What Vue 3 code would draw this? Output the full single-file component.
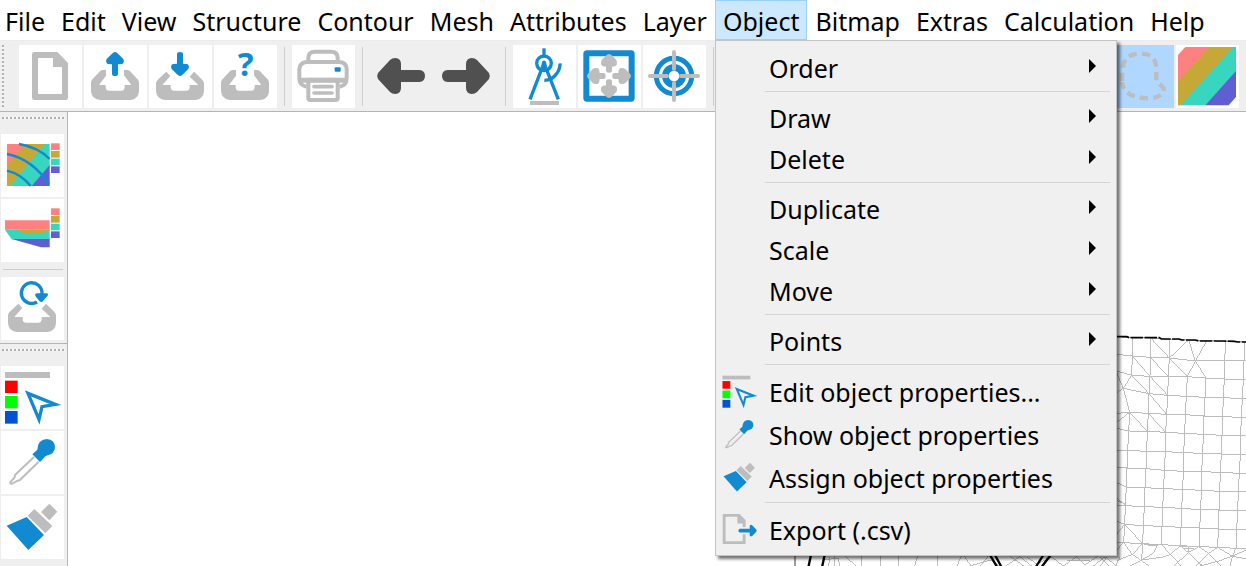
<template>
  <div class="app" @click="openMenu = ''">
    <svg class="sprite" aria-hidden="true">
      <symbol id="new" viewBox="0 0 189 189">
        <path fill="#bdbdbd" fill-rule="evenodd" d="M46 21H115L147 54V158q0 7-7 7H46q-7 0-7-7V28q0-7 7-7zM57 39V147H129V66H102V39z" />
      </symbol>
      <symbol id="tray" viewBox="0 0 189 189">
        <path fill="#bdbdbd" d="M66 75H57Q52 75 48 79L24 104Q21 108 21 114V139Q23 163 49 165H139Q163 163 165 139V114Q165 108 162 104L138 79Q134 75 129 75H120V91L142 120H122V128Q121 137 111 137H76Q66 137 65 128V120H45L66 92z" />
      </symbol>
      <symbol id="tray-open" viewBox="0 0 189 189">
        <path fill="#bdbdbd" d="M52 80L25 106Q21 110 21 116V139Q23 163 49 165H139Q163 163 165 139V116Q165 110 161 106L135 80L122 95L148 120H122V128Q121 137 111 137H76Q66 137 65 128V120H40L64 93z" />
      </symbol>
      <symbol id="load" viewBox="0 0 189 189">
        <use href="#tray" />
        <path fill="#118ad1" d="M93 21Q98 21 102 26L118 42Q122 48 118 55Q115 58 102 58V86Q102 93 93 93Q84 93 84 86V58Q71 58 68 55Q64 48 68 42L84 26Q88 21 93 21z" />
      </symbol>
      <symbol id="save" viewBox="0 0 189 189">
        <use href="#tray-open" />
        <path fill="#118ad1" d="M93 93Q98 93 102 88L118 72Q122 66 118 59Q115 56 102 56V28Q102 21 93 21Q84 21 84 28V56Q71 56 68 59Q64 66 68 72L84 88Q88 93 93 93z" />
      </symbol>
      <symbol id="print" viewBox="0 0 189 189">
        <g fill="none" stroke="#bdbdbd" stroke-width="12">
          <path d="M49 51V38Q50 20 68 20H118Q136 20 137 38V51" />
          <path d="M44 125Q22 122 22 100V72Q24 52 44 51H143Q163 52 164 72V100Q164 122 143 125" />
          <path d="M26 106H160" stroke-width="15" stroke-linecap="round" />
          <path d="M49 108V158Q49 165 56 165H130Q137 165 137 158V108" fill="#fff" />
          <path d="M49 106H137" stroke-width="15" />
          <path d="M66 125H120M66 144H120" stroke-width="11" stroke-linecap="round" />
        </g>
        <rect x="128" y="67" width="18" height="13" rx="3" fill="#118ad1" />
      </symbol>
      <symbol id="back" viewBox="0 0 189 189">
        <path fill="#505050" d="M24 84L60 45Q66 39 76 39Q93 40 93 57V75H148Q165 76 165 93Q165 110 148 111H93V129Q93 146 76 147Q66 147 60 141L24 102Q19 93 24 84z" />
      </symbol>
      <symbol id="forward" viewBox="0 0 189 189">
        <use href="#back" transform="translate(186 0) scale(-1 1)" />
      </symbol>
      <symbol id="measure" viewBox="0 0 189 189">
        <g fill="none" stroke="#118ad1" stroke-width="10">
          <path d="M93 10V32" />
          <circle cx="93" cy="55" r="22" />
          <path d="M90 62L51 163M96 62L136 163" />
          <path d="M141 55Q142 72 130 87Q117 106 94 106" />
        </g>
        <path fill="#118ad1" d="M83 74L87 50Q93 43 99 50L103 74z" />
        <path fill="#bdbdbd" d="M51 168H138V180H51z" />
      </symbol>
      <symbol id="zoom-all" viewBox="0 0 189 189">
        <rect x="25" y="25" width="136" height="136" rx="2" fill="none" stroke="#118ad1" stroke-width="18" />
        <path id="small-arrow" fill="#bdbdbd" d="M93 27Q98 28 101 31L115 45Q119 52 116 60Q112 65 102 65V76Q102 83 93 83Q84 83 84 76V65Q74 65 70 60Q67 52 71 45L85 31Q88 28 93 27z" />
        <use href="#small-arrow" transform="rotate(90 93 93)" />
        <use href="#small-arrow" transform="rotate(180 93 93)" />
        <use href="#small-arrow" transform="rotate(270 93 93)" />
      </symbol>
      <symbol id="target" viewBox="0 0 189 189">
        <g fill="none" stroke="#118ad1">
          <circle cx="93" cy="93" r="53" stroke-width="15" />
          <circle cx="93" cy="93" r="26" stroke-width="20" />
        </g>
        <path fill="none" stroke="#bdbdbd" stroke-width="12" stroke-linecap="round" d="M21 93H72M114 93H165M93 21V72M93 114V165" />
      </symbol>
      <symbol id="lasso" viewBox="0 0 189 189">
        <path fill="none" stroke="#bdbdbd" stroke-width="13" stroke-dasharray="25 15" stroke-dashoffset="-4" d="M33 112V80C36 40 54 26 92 26C126 28 136 45 136 75V106L158 130Q160 158 110 160C60 158 36 140 33 112" />
      </symbol>
      <symbol id="stripes" viewBox="0 0 189 189">
        <path fill="#ff8080" d="M28 6H104L6 114V30z" />
        <path fill="#c6a837" d="M100 6H176L20 181H6V110z" />
        <path fill="#38d6be" d="M172 6H180V82L92 181H14z" />
        <path fill="#5f5fd3" d="M180 78V156L158 181H88z" />
      </symbol>
      <symbol id="legend" viewBox="0 0 189 189">
        <path fill="#ff8080" d="M150 28h26v20h-26z" />
        <path fill="#c6a837" d="M150 51h26v20h-26z" />
        <path fill="#38d6be" d="M150 74h26v20h-26z" />
        <path fill="#5f5fd3" d="M150 97h26v20h-26z" />
      </symbol>
      <symbol id="plan" viewBox="0 0 189 189">
        <path fill="#ff8080" d="M18 30H75L18 96z" />
        <path fill="#c6a837" d="M72 30H135L30 156H18V93z" />
        <path fill="#38d6be" d="M132 30H146V96L94 156H27z" />
        <path fill="#5f5fd3" d="M146 93V156H92z" />
        <path fill="none" stroke="#118ad1" stroke-width="7" d="M54 30Q112 40 146 75M18 60Q92 74 144 150M18 110Q60 120 89 156" />
        <use href="#legend" />
      </symbol>
      <symbol id="section" viewBox="0 0 189 189">
        <path fill="#ff8080" d="M12 64H146V92H12z" />
        <path fill="#38d6be" d="M12 92H146V121H32z" />
        <path fill="#c6a837" d="M44 92H146V96L113 105H76z" />
        <path fill="#5f5fd3" d="M32 120H146V145H120z" />
        <use href="#legend" />
      </symbol>
      <symbol id="refresh" viewBox="0 0 189 189">
        <use href="#tray-open" />
        <path fill="none" stroke="#118ad1" stroke-width="10" d="M108 75A31 31 0 1 1 123 49V56" />
        <path fill="#118ad1" d="M103 52Q104 49 108 49H138Q143 50 140 56L124 74Q120 76 116 73L105 60Q102 56 103 52z" />
      </symbol>
      <symbol id="edit" viewBox="0 0 189 189">
        <path fill="#bdbdbd" d="M12 18H147V36H12z" />
        <path fill="#f00" d="M12 44H50V81H12z" />
        <path fill="#0f0" d="M12 90H50V127H12z" />
        <path fill="#0053d6" d="M12 135H50V173H12z" />
        <path fill="none" stroke="#118ad1" stroke-width="10" d="M81 82L163 115L123 122L114 160z" />
      </symbol>
      <symbol id="pick" viewBox="0 0 189 189">
        <path fill="none" stroke="#bdbdbd" stroke-width="6" stroke-linejoin="round" d="M99 78L42 132Q42 141 36 145Q27 153 28 158Q34 160 42 153Q50 148 56 148L113 92" />
        <path fill="#118ad1" d="M94 70L109 56Q110 26 137 24Q161 25 162 49Q161 69 140 73Q132 75 129 80L117 93z" />
      </symbol>
      <symbol id="brush" viewBox="0 0 189 189">
        <path fill="#118ad1" d="M17 89L77 63L129 117L82 162z" />
        <path fill="#bdbdbd" d="M100 39L154 90L133 112L80 59zM145 23L169 47L145 73L120 48z" />
      </symbol>
      <symbol id="export" viewBox="0 0 189 189">
        <path fill="none" stroke="#bdbdbd" stroke-width="14" d="M117 82V52L92 26H20V158H117V118" />
        <path fill="#bdbdbd" d="M84 24H96L122 52V66H84z" />
        <path fill="#118ad1" d="M96 91H144V76Q148 69 156 74L176 94Q179 100 176 106L156 126Q148 131 144 124V109H96Q89 106 89 100Q89 94 96 91z" />
      </symbol>
    </svg>

    <nav class="menubar" aria-label="Main menu">
      <div v-for="name in menus" :key="name" class="menu-slot">
        <button class="menu-button" :class="{ active: name === openMenu }" :aria-expanded="name === openMenu" @click.stop="toggle(name)">{{ name }}</button>
        <div v-if="name === 'Object' && openMenu === name" class="dropdown" role="menu" @click.stop>
          <template v-for="(item, i) in objectMenu" :key="i">
            <hr v-if="!item" class="menu-line">
            <button v-else class="menu-item" :class="{ 'with-icon': item.icon }" role="menuitem">
              <span class="item-icon">
                <svg v-if="item.icon" aria-hidden="true"><use :href="'#' + item.icon" /></svg>
              </span>
              <span class="item-label">{{ item.label }}</span>
              <svg v-if="!item.icon" class="submenu" viewBox="0 0 7 14" aria-hidden="true"><path d="M0 0L7 7L0 14z" /></svg>
            </button>
          </template>
        </div>
      </div>
    </nav>

    <div class="toolbar" role="toolbar" aria-label="Standard">
      <span class="grip"></span>
      <template v-for="(tool, i) in topTools" :key="i">
        <span v-if="!tool" class="divider"></span>
        <button v-else class="tool" :class="{ flat: tool.flat }" :aria-label="tool.label">
          <svg aria-hidden="true"><use :href="'#' + tool.icon" /></svg>
          <span v-if="tool.mark" class="mark">{{ tool.mark }}</span>
        </button>
      </template>
      <span class="tool-space"></span>
      <button class="tool checked" aria-label="Lasso selection" aria-pressed="true">
        <svg aria-hidden="true"><use href="#lasso" /></svg>
      </button>
      <button class="tool" aria-label="Coloured areas">
        <svg aria-hidden="true"><use href="#stripes" /></svg>
      </button>
    </div>

    <div class="workspace">
      <aside class="sidebar">
        <div v-for="(group, g) in sideTools" :key="g" class="side-group" role="toolbar">
          <span class="grip horizontal"></span>
          <template v-for="(tool, i) in group" :key="i">
            <span v-if="!tool" class="divider horizontal"></span>
            <button v-else class="tool" :aria-label="tool.label">
              <svg aria-hidden="true"><use :href="'#' + tool.icon" /></svg>
            </button>
          </template>
        </div>
      </aside>

      <main class="canvas">
        <!-- mesh coordinates are stored in thirds of a pixel -->
        <svg class="mesh" aria-label="Mesh">
          <g transform="translate(1032 208) scale(.333333)">
            <path class="edge" :d="meshPath" />
            <path class="edge" d="M152 54L208 114L262 170M266 60L208 114M266 60L286 123L318 174M320 63L286 123L262 170M97 108L150 169L203 226M151 112L205 170M95 166L147 221L200 283M95 166L70 205L89 277L142 334M50 158L70 205L50 218M145 280L197 337M89 277L50 307M74 613L128 671M74 613L50 642M50 532L76 557M50 542L76 552" />
            <path class="edge" d="M71 668L50 690M71 668L97 703L128 671L125 720L85 740M97 703L50 722M97 703L150 740M128 671L160 677L172 677L160 700L125 720L190 711L212 703L241 677L265 698L297 680L326 700L353 682L397 709L438 690M144 677H174M184 674L212 703L245 740M241 680H300M251 685H283M265 698V677M265 698L220 740M265 698L310 740M326 700L285 740M326 700L365 740M397 709L350 725L300 738M397 709L438 716M397 709L390 740M408 685L397 709M0 712L30 740M20 712L0 740M60 712L45 740" />
            <path class="outline" d="M50 50H80L88 53H178L184 57H238L244 60H286L296 63H370L404 64L412 66H445" />
          </g>
          <g transform="translate(712 428) scale(.333333)">
            <path class="frame" d="M45 40V85" />
            <path class="edge" d="M245 40V85M302 40V85M356 40V85M413 45L404 80M473 45V80M150 50L145 80M165 48L162 80M130 60L175 54L180 80M195 48L230 80M545 45L530 80M550 45L575 80M570 78L630 60L660 78M600 80L625 48M675 80L720 50L755 78M690 50L735 80M740 50L770 72L820 50M820 55L850 78L890 50L915 75L955 48M860 60L930 62M940 78L975 50L1010 78" />
            <path class="outline thick" d="M93 45L85 82M134 45L126 82M630 45L652 82M645 45L665 82M790 45L767 82M812 45L784 82" />
          </g>
        </svg>
      </main>
    </div>
  </div>
</template>

<script setup>
import { computed, ref } from 'vue';

const menus = ['File', 'Edit', 'View', 'Structure', 'Contour', 'Mesh', 'Attributes', 'Layer', 'Object', 'Bitmap', 'Extras', 'Calculation', 'Help'];
const openMenu = ref('Object');

function toggle(name) {
  openMenu.value = openMenu.value === name ? '' : name;
}

// null is a separator
const objectMenu = [
  { label: 'Order' },
  null,
  { label: 'Draw' },
  { label: 'Delete' },
  null,
  { label: 'Duplicate' },
  { label: 'Scale' },
  { label: 'Move' },
  null,
  { label: 'Points' },
  null,
  { label: 'Edit object properties...', icon: 'edit' },
  { label: 'Show object properties', icon: 'pick' },
  { label: 'Assign object properties', icon: 'brush' },
  null,
  { label: 'Export (.csv)', icon: 'export' },
];

const topTools = [
  { icon: 'new', label: 'New' },
  { icon: 'load', label: 'Open' },
  { icon: 'save', label: 'Save' },
  { icon: 'tray', label: 'File info', mark: '?' },
  null,
  { icon: 'print', label: 'Print' },
  null,
  { icon: 'back', label: 'Undo', flat: true },
  { icon: 'forward', label: 'Redo', flat: true },
  null,
  { icon: 'measure', label: 'Measure' },
  { icon: 'zoom-all', label: 'Show all' },
  { icon: 'target', label: 'Centre' },
  null,
];

const sideTools = [
  [
    { icon: 'plan', label: 'Plan view' },
    { icon: 'section', label: 'Section view' },
    null,
    { icon: 'refresh', label: 'Reload' },
  ],
  [
    { icon: 'edit', label: 'Edit object properties' },
    { icon: 'pick', label: 'Show object properties' },
    { icon: 'brush', label: 'Assign object properties' },
  ],
];

const meshRows = [
  [[50, 50], [98, 53], [152, 54], [208, 58], null, null, [377, 64], [434, 66]],
  [[50, 103], [97, 108], [151, 112], [208, 114], [286, 123], null, [374, 122], [432, 122]],
  [[50, 153], [95, 166], [150, 169], [205, 170], [262, 170], [318, 174], [373, 177], [430, 179]],
  [[70, 205], null, [147, 221], [203, 226], [259, 229], [315, 232], [370, 233], [427, 236]],
  [[50, 280], [89, 277], [145, 280], [200, 283], [256, 284], [312, 288], [368, 290], [424, 292]],
  [[50, 325], [86, 333], [142, 334], [197, 337], [254, 340], [310, 343], [366, 346], [422, 347]],
  [[50, 391], [83, 391], [140, 394], [196, 395], [251, 398], [308, 400], [364, 402], [421, 404]],
  [[50, 442], [81, 444], [138, 446], [193, 451], [250, 454], [305, 455], [361, 457], [418, 460]],
  [[50, 488], [79, 501], [135, 503], [191, 506], [248, 508], [304, 511], [359, 514], [415, 516]],
  [[50, 555], [76, 557], [133, 560], [188, 562], [245, 565], [302, 569], [357, 570], [413, 572]],
  [[50, 603], [74, 613], [130, 617], [186, 619], [243, 622], [299, 624], [355, 627], [410, 629]],
  [[50, 669], [71, 668], [128, 671], [184, 674], [241, 677], [297, 680], [353, 682], [408, 685]],
];

const meshPath = computed(() => {
  const across = meshRows.map((row) => 'M' + row.filter(Boolean).map((p) => p.join(' ')).join('L') + 'L445 ' + row.at(-1)[1]);
  const down = [];
  for (let c = 1; c < 8; c++) {
    for (let r = 1; r < meshRows.length; r++) {
      const a = meshRows[r - 1][c];
      const b = meshRows[r][c];
      if (!a || !b || (c === 4 && r === 2)) continue;
      down.push(`M${a.join(' ')}L${b.join(' ')}`);
    }
  }
  return across.join('') + down.join('');
});
</script>

<style>
body { margin: 0; overflow: hidden; }
</style>

<style scoped>
.app {
  display: flex;
  flex-direction: column;
  height: 100vh;
  background: #fff;
  color: #000;
  font-family: "Noto Sans", "Open Sans", sans-serif;
  font-size: 25px;
  line-height: 36px;
}
.sprite { position: absolute; width: 0; height: 0; }
button {
  padding: 0;
  border: 0;
  background: none;
  color: inherit;
  font: inherit;
}
svg { display: block; }

.menubar {
  display: flex;
  flex: none;
  height: 40px;
  border-bottom: 1px solid #ececec;
}
.menu-slot { position: relative; }
.menu-slot:first-child { margin-left: -3px; }
.menu-button {
  height: 40px;
  padding: 2px 7px;
  border: 1px solid transparent;
  white-space: nowrap;
}
.menu-button.active { background: #cce8ff; border-color: #99d1ff; }

.dropdown {
  position: absolute;
  top: 40px;
  left: 0;
  z-index: 10;
  box-sizing: border-box;
  width: 402px;
  padding: 4px 0 6px;
  border: 1px solid #c4c4c4;
  background: #f0f0f0;
  box-shadow: 3px 3px 3px rgba(0, 0, 0, .55);
}
.menu-item {
  display: flex;
  align-items: flex-end;
  width: 100%;
  height: 41px;
  padding: 0 20px 0 4px;
  text-align: left;
}
.menu-item.with-icon { height: 43px; }
.menu-item:hover { background: #91c9f7; }
.item-icon { width: 39px; margin-right: 10px; }
.item-icon svg { width: 39px; height: 39px; }
.item-label { flex: 1; white-space: nowrap; }
.with-icon .item-label { padding-bottom: 1px; }
.submenu { align-self: center; width: 7px; height: 14px; }
.menu-line {
  height: 1px;
  margin: 5px 6px 3px 49px;
  border: 0;
  background: #d5d5d5;
}

.toolbar {
  display: flex;
  flex: none;
  gap: 2px;
  height: 63px;
  padding: 4px 0 3px 2px;
  border-bottom: 1px solid #b4b4b4;
  background: #efefef;
}
.tool { position: relative; flex: none; width: 63px; height: 63px; background: #fff; }
.tool.flat { background: none; }
.tool.checked { background: #afd7ff; }
.tool svg { width: 63px; height: 63px; }
.mark {
  position: absolute;
  top: 0;
  left: 0;
  width: 63px;
  color: #118ad1;
  font-size: 33px;
  font-weight: 700;
  line-height: 38px;
  text-align: center;
}
.grip {
  flex: none;
  width: 2px;
  height: 62px;
  margin-right: 13px;
  background: repeating-linear-gradient(#b0b0b0 0 2px, #f8f8f8 2px 4px);
}
.divider { flex: none; width: 1px; margin: 2px 5px; background: #cecece; }
.tool-space { flex: 0 0 388px; }

.workspace { display: flex; flex: 1; min-height: 0; }
.sidebar {
  flex: none;
  width: 67px;
  border-right: 1px solid #b4b4b4;
  background: #efefef;
}
.side-group {
  display: flex;
  flex-direction: column;
  gap: 2px;
  padding: 5px 1px 3px;
  border-bottom: 1px solid #b4b4b4;
}
.side-group:last-child { border-bottom: 0; }
.grip.horizontal {
  width: 63px;
  height: 2px;
  margin: 0 0 13px 1px;
  background: repeating-linear-gradient(90deg, #b0b0b0 0 2px, #f8f8f8 2px 4px);
}
.divider.horizontal { width: 60px; height: 1px; margin: 5px 2px; }

.canvas { position: relative; flex: 1; min-width: 0; }
.mesh { position: absolute; inset: 0; width: 100%; height: 100%; }
.edge { fill: none; stroke: #bdbdbd; stroke-width: 3; shape-rendering: crispEdges; }
.outline { fill: none; stroke: #000; stroke-width: 5; stroke-dasharray: 38 4; }
.outline.thick { stroke-width: 7; stroke-dasharray: none; }
.frame { stroke: #888; stroke-width: 5; }
</style>
